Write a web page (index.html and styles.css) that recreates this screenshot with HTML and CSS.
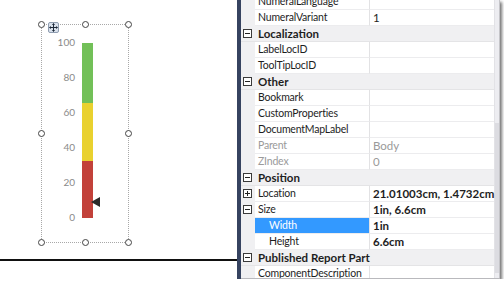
FILE: index.html
```html
<!DOCTYPE html>
<html lang="en">
<head>
    <meta charset="UTF-8">
    <title>Report Designer - Gauge Properties</title>
    <link rel="stylesheet" href="styles.css">
</head>
<body>
    <div class="frame">
        <div class="canvas">
            <div class="selection">
                <span class="handle h-tl"></span>
                <span class="handle h-tc"></span>
                <span class="handle h-tr"></span>
                <span class="handle h-ml"></span>
                <span class="handle h-mr"></span>
                <span class="handle h-bl"></span>
                <span class="handle h-bc"></span>
                <span class="handle h-br"></span>
                <svg class="move" width="11" height="11" viewBox="0 0 11 11">
                    <rect x="0.5" y="0.5" width="10" height="10" rx="1.5" fill="#d9e1ec" stroke="#8f9db0"/>
                    <path d="M5.5 1.5v8M1.5 5.5h8" stroke="#1e2a3a" stroke-width="1"/>
                    <path d="M5.5 1.2l-1.6 1.8h3.2zM5.5 9.8l-1.6-1.8h3.2zM1.2 5.5l1.8-1.6v3.2zM9.8 5.5l-1.8-1.6v3.2z" fill="#1e2a3a"/>
                </svg>
                <div class="gauge">
                    <div class="scale">
                        <span>100</span>
                        <span>80</span>
                        <span>60</span>
                        <span>40</span>
                        <span>20</span>
                        <span>0</span>
                    </div>
                    <div class="bar">
                        <div class="seg green"></div>
                        <div class="seg yellow"></div>
                        <div class="seg red"></div>
                        <span class="pointer"></span>
                    </div>
                </div>
            </div>
            <div class="page-edge"></div>
        </div>
        <div class="divider"></div>
        <div class="props">
            <div class="grid">
                <div class="row"><span class="name">NumeralLanguage</span><span class="value"></span></div>
                <div class="row"><span class="name">NumeralVariant</span><span class="value">1</span></div>
                <div class="row cat"><span class="box minus"></span><span class="cat-name">Localization</span></div>
                <div class="row"><span class="name">LabelLocID</span><span class="value"></span></div>
                <div class="row"><span class="name">ToolTipLocID</span><span class="value"></span></div>
                <div class="row cat"><span class="box minus"></span><span class="cat-name">Other</span></div>
                <div class="row"><span class="name">Bookmark</span><span class="value"></span></div>
                <div class="row"><span class="name">CustomProperties</span><span class="value"></span></div>
                <div class="row"><span class="name">DocumentMapLabel</span><span class="value"></span></div>
                <div class="row off"><span class="name">Parent</span><span class="value">Body</span></div>
                <div class="row off"><span class="name">ZIndex</span><span class="value">0</span></div>
                <div class="row cat"><span class="box minus"></span><span class="cat-name">Position</span></div>
                <div class="row"><span class="box plus"></span><span class="name">Location</span><span class="value bold">21.01003cm, 1.4732cm</span></div>
                <div class="row"><span class="box minus"></span><span class="name">Size</span><span class="value bold">1in, 6.6cm</span></div>
                <div class="row sub selected"><span class="name">Width</span><span class="value bold">1in</span></div>
                <div class="row sub"><span class="name">Height</span><span class="value bold">6.6cm</span></div>
                <div class="row cat"><span class="box minus"></span><span class="cat-name">Published Report Part</span></div>
                <div class="row"><span class="name">ComponentDescription</span><span class="value"></span></div>
            </div>
            <div class="scrollbar"><div class="thumb"></div></div>
        </div>
    </div>
</body>
</html>
```

FILE: styles.css
```css
body {
    margin: 0;
    background-color: #fff;
    font-family: 'Lato', sans-serif;
    overflow: hidden;
}
.frame {
    width: 500px;
    height: 279px;
    display: flex;
    background-color: #fff;
    box-shadow: 2px 2px 3px rgba(0, 0, 0, 0.55);
}
.canvas {
    width: 237px;
    position: relative;
    display: flex;
    flex-direction: column;
}
.selection {
    position: relative;
    margin: 24px 0 0 41px;
    width: 86px;
    height: 217px;
    border: 1px dotted #a8a8a8;
}
.page-edge {
    margin-top: 16px;
    height: 2px;
    background-color: #111;
}
.handle {
    position: absolute;
    width: 5px;
    height: 5px;
    border: 1px solid #444;
    border-radius: 50%;
    background-color: #fff;
}
.h-tl { left: -4px; top: -4px; }
.h-tc { left: 40px; top: -4px; }
.h-tr { right: -4px; top: -4px; }
.h-ml { left: -4px; top: 105px; }
.h-mr { right: -4px; top: 105px; }
.h-bl { left: -4px; bottom: -4px; }
.h-bc { left: 40px; bottom: -4px; }
.h-br { right: -4px; bottom: -4px; }
.move {
    position: absolute;
    left: 6px;
    top: -3px;
}
.gauge {
    display: flex;
}
.scale {
    width: 33px;
    display: flex;
    flex-direction: column;
    align-items: flex-end;
}
.scale span {
    height: 35px;
    line-height: 35px;
    font-size: 10px;
    color: #8a8a8a;
}
.bar {
    position: relative;
    margin: 18px 0 0 7px;
    width: 11px;
    height: 175px;
    display: flex;
    flex-direction: column;
}
.green { background-color: #72c058; flex: 60; }
.yellow { background-color: #e9d12f; flex: 58; }
.red { background-color: #c2413a; flex: 57; }
.pointer {
    position: absolute;
    left: 9px;
    top: 154px;
    width: 0;
    height: 0;
    border-top: 5px solid transparent;
    border-bottom: 5px solid transparent;
    border-right: 9px solid #2a2a2a;
}
.divider {
    width: 4px;
    background-color: #364360;
}
.props {
    flex: 1;
    display: flex;
    overflow: hidden;
    background-color: #f0f0f2;
    border-bottom: 1px solid #b9b9bd;
}
.grid {
    flex: 1;
    margin-top: -6px;
}
.row {
    height: 16px;
    display: flex;
    align-items: center;
    position: relative;
    font-size: 11.5px;
    color: #1e1e1e;
    padding-left: 14px;
}
.row .name,
.row .value {
    height: 15px;
    line-height: 15px;
    background-color: #fff;
    border-bottom: 1px solid #ececee;
    white-space: nowrap;
}
.row .name {
    width: 111px;
    padding-left: 3px;
    border-right: 1px solid #e2e2e4;
    font-size: 10.5px;
    letter-spacing: -0.2px;
}
.row .value {
    flex: 1;
    padding-left: 3px;
}
.row.sub .name {
    width: 100px;
    padding-left: 14px;
}
.row.selected .name {
    background-color: #3399ff;
    color: #fff;
}
.row.off {
    color: #9a9a9a;
}
.bold {
    font-weight: 700;
}
.cat {
    font-weight: 700;
    padding-left: 17px;
    border-bottom: 1px solid #e4e4e6;
    height: 15px;
}
.box {
    position: absolute;
    left: 2px;
    top: 3px;
    width: 7px;
    height: 7px;
    border: 1px solid #3a3a3a;
    background-color: #fff;
}
.box::before {
    content: '';
    position: absolute;
    left: 1px;
    top: 3px;
    width: 5px;
    height: 1px;
    background-color: #222;
}
.box.plus::after {
    content: '';
    position: absolute;
    left: 3px;
    top: 1px;
    width: 1px;
    height: 5px;
    background-color: #222;
}
.scrollbar {
    width: 8px;
    border-left: 1px solid #e2e2e6;
    border-right: 1px solid #c4c4c8;
    background-color: #ededf1;
    padding-top: 123px;
}
.thumb {
    height: 150px;
    background-color: #dcdce1;
}
```
